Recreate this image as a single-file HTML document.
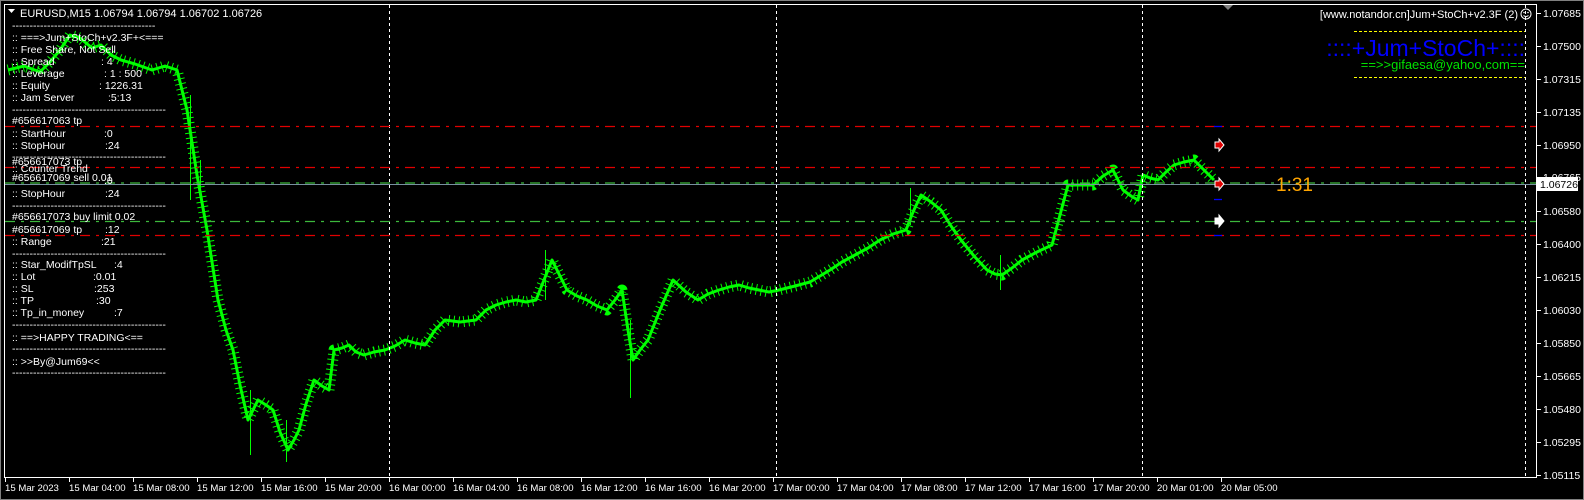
<!DOCTYPE html>
<html><head><meta charset="utf-8">
<style>
html,body{margin:0;padding:0;background:#000;width:1584px;height:500px;overflow:hidden}
svg{display:block}
text{font-family:"Liberation Sans",sans-serif}
</style></head>
<body>
<svg width="1584" height="500" viewBox="0 0 1584 500" xmlns="http://www.w3.org/2000/svg">
<rect x="0" y="0" width="1584" height="500" fill="#000"/>
<rect x="0.5" y="0.5" width="1583" height="499" fill="none" stroke="#808080"/>
<g fill="none" stroke="#00ff00" stroke-linejoin="round">
<polyline stroke-width="3" points="8,70 24,66 40,72 50,62 60,50 70,35 80,38 92,48 101,45 111,55 121,60 135,64 152,70 165,66 177,70 187,110 197,175 207,230 212,262 218,300 226,330 233,350 240,385 248,420 258,400 266,405 273,410 280,432 288,450 294,440 299,430 306,404 314,380 322,386 329,390 334,350 342,348 349,345 356,352 364,355 374,352 385,350 395,346 405,340 415,343 425,345 435,330 445,320 460,322 476,320 486,310 496,305 506,302 516,300 526,302 536,300 544,280 552,260 560,276 567,290 577,296 587,300 597,306 607,310 615,300 622,290 628,330 633,360 640,350 648,340 660,310 673,280 686,292 698,300 708,294 719,290 729,287 739,285 749,288 759,290 769,292 779,290 795,286 810,282 820,276 830,270 842,262 855,255 868,248 880,240 893,234 906,230 913,212 921,195 931,202 941,210 951,226 961,240 974,256 987,270 995,274 1002,275 1012,268 1022,260 1037,252 1052,245 1060,215 1068,185 1080,185 1093,185 1103,176 1113,170 1118,180 1123,190 1131,196 1138,200 1143,175 1150,178 1158,180 1166,172 1174,165 1184,162 1194,160 1202,168 1209,175 1214,180"/>
<polyline stroke-width="11" stroke-dasharray="1,4" points="8,70 24,66 40,72 50,62 60,50 70,35 80,38 92,48 101,45 111,55 121,60 135,64 152,70 165,66 177,70 187,110 197,175 207,230 212,262 218,300 226,330 233,350 240,385 248,420 258,400 266,405 273,410 280,432 288,450 294,440 299,430 306,404 314,380 322,386 329,390 334,350 342,348 349,345 356,352 364,355 374,352 385,350 395,346 405,340 415,343 425,345 435,330 445,320 460,322 476,320 486,310 496,305 506,302 516,300 526,302 536,300 544,280 552,260 560,276 567,290 577,296 587,300 597,306 607,310 615,300 622,290 628,330 633,360 640,350 648,340 660,310 673,280 686,292 698,300 708,294 719,290 729,287 739,285 749,288 759,290 769,292 779,290 795,286 810,282 820,276 830,270 842,262 855,255 868,248 880,240 893,234 906,230 913,212 921,195 931,202 941,210 951,226 961,240 974,256 987,270 995,274 1002,275 1012,268 1022,260 1037,252 1052,245 1060,215 1068,185 1080,185 1093,185 1103,176 1113,170 1118,180 1123,190 1131,196 1138,200 1143,175 1150,178 1158,180 1166,172 1174,165 1184,162 1194,160 1202,168 1209,175 1214,180"/>
</g>
<g stroke="#00ff00" stroke-width="1">
<line x1="190.5" y1="95" x2="190.5" y2="200"/><line x1="200.5" y1="160" x2="200.5" y2="190"/>
<line x1="250.5" y1="390" x2="250.5" y2="455"/><line x1="286.5" y1="420" x2="286.5" y2="462"/>
<line x1="630.5" y1="320" x2="630.5" y2="398"/><line x1="545.5" y1="250" x2="545.5" y2="300"/>
<line x1="1000.5" y1="255" x2="1000.5" y2="290"/><line x1="910.5" y1="188" x2="910.5" y2="225"/>
</g>
<g stroke="#fff" stroke-dasharray="3,3" stroke-width="1">
<line x1="389.5" y1="5" x2="389.5" y2="477"/>
<line x1="776.5" y1="5" x2="776.5" y2="477"/>
<line x1="1142.5" y1="5" x2="1142.5" y2="477"/>
<line x1="1525.5" y1="5" x2="1525.5" y2="477"/>
</g>
<g stroke-width="1.3" stroke-dasharray="10,6,3,6">
<line x1="5" y1="126.5" x2="1536" y2="126.5" stroke="#e00000"/>
<line x1="5" y1="167.5" x2="1536" y2="167.5" stroke="#e00000"/>
<line x1="5" y1="183" x2="1536" y2="183" stroke="#3cb83c"/>
<line x1="5" y1="221.5" x2="1536" y2="221.5" stroke="#3cb83c"/>
<line x1="5" y1="235.5" x2="1536" y2="235.5" stroke="#e00000"/>
</g>
<line x1="5" y1="184.5" x2="1536" y2="184.5" stroke="#7890a0" stroke-width="1"/>
<g stroke="#0000ff" stroke-width="1.3">
<line x1="1214" y1="126.5" x2="1222" y2="126.5"/>
<line x1="1214" y1="199.5" x2="1222" y2="199.5"/>
<line x1="1214" y1="235.5" x2="1222" y2="235.5"/>
</g>
<g stroke="#fff" stroke-width="1">
<path d="M1215 142h4v-3l5 6l-5 6v-3h-4z" fill="#e00000"/>
<path d="M1215 181h4v-3l5 6l-5 6v-3h-4z" fill="#e00000"/>
<path d="M1215 218h4v-3l5 6l-5 6v-3h-4z" fill="#fff"/>
</g>
<line x1="4" y1="4.5" x2="1537" y2="4.5" stroke="#fff"/>
<line x1="4.5" y1="4" x2="4.5" y2="477" stroke="#fff"/>
<line x1="4" y1="477.5" x2="1537" y2="477.5" stroke="#fff"/>
<line x1="1536.5" y1="4" x2="1536.5" y2="478" stroke="#fff"/>
<path d="M1223 5h10l-5 5z" fill="#808080"/>
<g fill="#fff" font-size="10.5">
<text x="1543" y="17">1.07685</text>
<text x="1543" y="50">1.07500</text>
<text x="1543" y="83">1.07315</text>
<text x="1543" y="116">1.07135</text>
<text x="1543" y="149">1.06950</text>
<text x="1543" y="181">1.06765</text>
<text x="1543" y="215">1.06580</text>
<text x="1543" y="248">1.06400</text>
<text x="1543" y="281">1.06215</text>
<text x="1543" y="314">1.06030</text>
<text x="1543" y="347">1.05850</text>
<text x="1543" y="380">1.05665</text>
<text x="1543" y="413">1.05480</text>
<text x="1543" y="446">1.05295</text>
<text x="1543" y="479">1.05115</text>
</g>
<path stroke="#fff" d="M1537 13.5h4M1537 46.5h4M1537 79.5h4M1537 112.5h4M1537 145.5h4M1537 178.5h4M1537 211.5h4M1537 244.5h4M1537 277.5h4M1537 310.5h4M1537 343.5h4M1537 376.5h4M1537 409.5h4M1537 442.5h4M1537 475.5h4"/>
<rect x="1537" y="177" width="41" height="14" fill="#fff"/>
<text x="1540" y="188" font-size="10.5" fill="#000">1.06726</text>
<g fill="#fff" font-size="9.6">
<text x="5" y="491">15 Mar 2023</text>
<text x="69" y="491">15 Mar 04:00</text>
<text x="133" y="491">15 Mar 08:00</text>
<text x="197" y="491">15 Mar 12:00</text>
<text x="261" y="491">15 Mar 16:00</text>
<text x="325" y="491">15 Mar 20:00</text>
<text x="389" y="491">16 Mar 00:00</text>
<text x="453" y="491">16 Mar 04:00</text>
<text x="517" y="491">16 Mar 08:00</text>
<text x="581" y="491">16 Mar 12:00</text>
<text x="645" y="491">16 Mar 16:00</text>
<text x="709" y="491">16 Mar 20:00</text>
<text x="773" y="491">17 Mar 00:00</text>
<text x="837" y="491">17 Mar 04:00</text>
<text x="901" y="491">17 Mar 08:00</text>
<text x="965" y="491">17 Mar 12:00</text>
<text x="1029" y="491">17 Mar 16:00</text>
<text x="1093" y="491">17 Mar 20:00</text>
<text x="1157" y="491">20 Mar 01:00</text>
<text x="1221" y="491">20 Mar 05:00</text>
</g>
<path stroke="#fff" d="M5.5 477v5M69.5 477v5M133.5 477v5M197.5 477v5M261.5 477v5M325.5 477v5M389.5 477v5M453.5 477v5M517.5 477v5M581.5 477v5M645.5 477v5M709.5 477v5M773.5 477v5M837.5 477v5M901.5 477v5M965.5 477v5M1029.5 477v5M1093.5 477v5M1157.5 477v5M1221.5 477v5"/>
<path d="M8 9h7l-3.5 4z" fill="#fff"/>
<text x="20" y="17" font-size="11" fill="#fff">EURUSD,M15  1.06794 1.06794 1.06702 1.06726</text>
<g font-size="10.5" fill="#fff">
<text x="12" y="29">-----------------------------------------</text>
<text x="12" y="41">:: ===&gt;Jum+StoCh+v2.3F+&lt;===</text>
<text x="12" y="53">:: Free Share, Not Sell</text>
<text x="12" y="65">:: Spread</text><text x="101" y="65">: 4</text>
<text x="12" y="77">:: Leverage</text><text x="104" y="77">: 1 : 500</text>
<text x="12" y="89">:: Equity</text><text x="99" y="89">: 1226.31</text>
<text x="12" y="101">:: Jam Server</text><text x="108" y="101">:5:13</text>
<text x="12" y="113">--------------------------------------------</text>
<text x="12" y="124">#656617063 tp</text>
<text x="12" y="137">:: StartHour</text><text x="104" y="137">:0</text>
<text x="12" y="149">:: StopHour</text><text x="105" y="149">:24</text>
<text x="12" y="160">--------------------------------------------</text>
<text x="12" y="165">#656617073 tp</text>
<text x="12" y="172">:: Counter Trend</text>
<text x="12" y="181">#656617069 sell 0.01</text>
<text x="104" y="184">:0</text>
<text x="12" y="197">:: StopHour</text><text x="105" y="197">:24</text>
<text x="12" y="209">--------------------------------------------</text>
<text x="12" y="220">#656617073 buy limit 0.02</text>
<text x="12" y="233">#656617069 tp</text><text x="105" y="233">:12</text>
<text x="12" y="245">:: Range</text><text x="101" y="245">:21</text>
<text x="12" y="257">--------------------------------------------</text>
<text x="12" y="268">:: Star_ModifTpSL</text><text x="114" y="268">:4</text>
<text x="12" y="280">:: Lot</text><text x="93" y="280">:0.01</text>
<text x="12" y="292">:: SL</text><text x="94" y="292">:253</text>
<text x="12" y="304">:: TP</text><text x="96" y="304">:30</text>
<text x="12" y="316">:: Tp_in_money</text><text x="114" y="316">:7</text>
<text x="12" y="328">--------------------------------------------</text>
<text x="12" y="341">:: ==&gt;HAPPY TRADING&lt;==</text>
<text x="12" y="352">--------------------------------------------</text>
<text x="12" y="365">:: &gt;&gt;By@Jum69&lt;&lt;</text>
<text x="12" y="376">--------------------------------------------</text>
</g>
<text x="1518" y="18" font-size="11" fill="#fff" text-anchor="end">[www.notandor.cn]Jum+StoCh+v2.3F (2)</text>
<circle cx="1526" cy="14" r="5" fill="none" stroke="#fff"/>
<circle cx="1524" cy="12.5" r="0.8" fill="#fff"/><circle cx="1528" cy="12.5" r="0.8" fill="#fff"/>
<path d="M1523.5 15.5q2.5 2 5 0" stroke="#fff" fill="none"/>
<g stroke="#ffff00" stroke-dasharray="3,2">
<line x1="1354" y1="31.5" x2="1525" y2="31.5"/>
<line x1="1354" y1="77.5" x2="1525" y2="77.5"/>
</g>
<text x="1525" y="56" font-size="23" fill="#0000ff" text-anchor="end">::::+Jum+StoCh+::::</text>
<text x="1525" y="69" font-size="13" fill="#00e000" text-anchor="end">==&gt;&gt;gifaesa@yahoo,com==</text>
<text x="1276" y="191" font-size="19" fill="#ffa500">1:31</text>
</svg>
</body></html>
